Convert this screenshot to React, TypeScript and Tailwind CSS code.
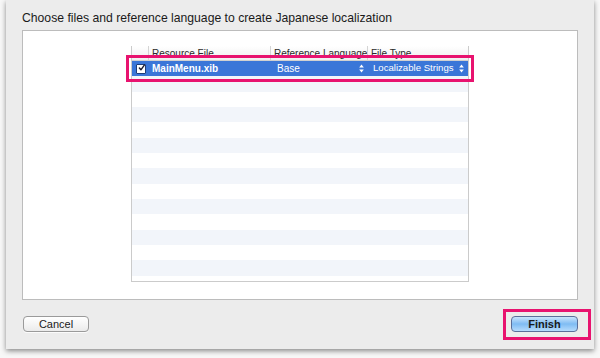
const rows = Array.from({ length: 15 }, (_, i) => i)

const Arrows = () => (
  <svg width="5" height="9" viewBox="0 0 5 9" className="shrink-0">
    <path d="M2.5 0.5L4.8 3.5H0.2Z" fill="#ffffff" />
    <path d="M2.5 8.5L4.8 5.5H0.2Z" fill="#ffffff" />
  </svg>
)

const Checkbox = () => (
  <div className="w-[10px] h-[10px] bg-white border border-[#1c3d7a] rounded-[1px] flex items-center justify-center">
    <svg width="10" height="10" viewBox="0 0 10 10" className="-mt-[2px] ml-[1px]">
      <path d="M2 5L4.2 7.6L9 0.8" stroke="#1a1a2e" strokeWidth="2" fill="none" strokeLinecap="round" strokeLinejoin="round" />
    </svg>
  </div>
)

export default function App() {
  return (
    <div className="w-[600px] h-[358px] bg-[#f7f7f7] relative overflow-hidden" style={{ fontFamily: '"Liberation Sans", Arial, sans-serif' }}>
      <div className="ml-[6px] w-[588px] h-[349px] bg-[#ececec] shadow-[0_2px_5px_rgba(0,0,0,0.45)] flex flex-col">
        <div className="pl-[16px] pt-[10px] h-[30px] text-[12.2px] text-[#1a1a1a] leading-[16px] whitespace-nowrap">
          Choose files and reference language to create Japanese localization
        </div>
        <div className="ml-[16px] w-[556px] h-[270px] bg-white border border-[#bcbcbc] flex justify-center pt-[15px]">
          <div className="w-[338px] h-[236px] border-x border-b border-[#cbcbcb] overflow-hidden flex flex-col">
            <div className="h-[15px] shrink-0 flex text-[10px] text-[#2a2a2a] leading-[15px] whitespace-nowrap bg-gradient-to-b from-white to-[#f0f0f0] border-b border-[#d0d0d0]">
              <div className="w-[17px] shrink-0 border-r border-[#d4d4d4]" />
              <div className="w-[122px] shrink-0 pl-[3px] border-r border-[#d4d4d4] overflow-hidden">Resource File</div>
              <div className="w-[97px] shrink-0 pl-[3px] border-r border-[#d4d4d4] overflow-hidden">Reference Language</div>
              <div className="flex-1 pl-[3px] overflow-hidden">File Type</div>
            </div>
            {rows.map((i) =>
              i === 0 ? (
                <div key={i} className="h-[15.33px] shrink-0 bg-[#3a76d8] flex items-center text-white text-[10px] whitespace-nowrap">
                  <div className="w-[17px] shrink-0 flex justify-center">
                    <Checkbox />
                  </div>
                  <div className="w-[122px] shrink-0 pl-[3px] font-bold">MainMenu.xib</div>
                  <div className="w-[97px] shrink-0 pl-[6px] pr-[4px] flex items-center justify-between">
                    <span>Base</span>
                    <Arrows />
                  </div>
                  <div className="flex-1 pl-[5px] pr-[4px] flex items-center justify-between">
                    <span className="text-[9.6px]">Localizable Strings</span>
                    <Arrows />
                  </div>
                </div>
              ) : (
                <div key={i} className={`h-[15.33px] shrink-0 ${i % 2 === 1 ? 'bg-[#f2f5fa]' : 'bg-white'}`} />
              )
            )}
          </div>
        </div>
        <div className="flex justify-between items-start pt-[16px] pl-[17px] pr-[16px]">
          <button className="w-[66px] h-[16px] rounded-[4px] border border-[#9a9a9a] bg-gradient-to-b from-white to-[#ebebeb] text-[11px] leading-[14px] text-[#1a1a1a] shadow-[0_1px_0_rgba(255,255,255,0.8)]">
            Cancel
          </button>
          <button className="w-[67px] h-[16px] rounded-[4px] border border-[#5a6f9a] bg-gradient-to-b from-[#c9e4fb] via-[#7fbcf3] to-[#b6dcfc] text-[11px] leading-[14px] font-bold text-[#1a1a1a]">
            Finish
          </button>
        </div>
      </div>
      <div className="absolute left-[126px] top-[55px] w-[348px] h-[27px] border-[3px] border-[#e8136f]" />
      <div className="absolute left-[503px] top-[309px] w-[88px] h-[31px] border-[3px] border-[#e8136f]" />
    </div>
  )
}
